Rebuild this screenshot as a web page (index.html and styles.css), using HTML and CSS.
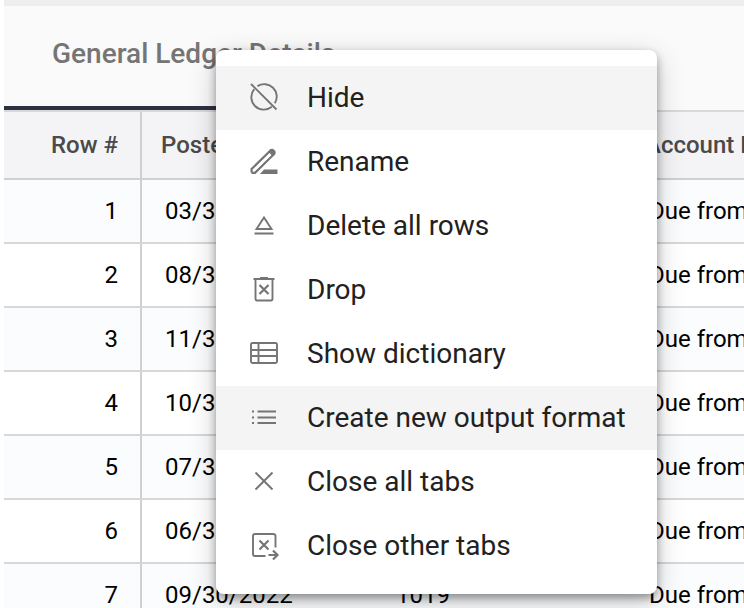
FILE: index.html
```html
<!DOCTYPE html>
<html lang="en">
<head>
<meta charset="utf-8">
<title>General Ledger Details</title>
<link rel="stylesheet" href="styles.css">
</head>
<body>
<main class="workspace">
  <nav class="tabs"><button class="tab" type="button">General Ledger Details</button></nav>
  <table class="ledger">
    <colgroup><col class="col-row"><col class="col-date"><col class="col-account"><col></colgroup>
    <thead>
      <tr><th class="num">Row #</th><th>Posted Date</th><th>Account</th><th>Account Name</th></tr>
    </thead>
    <tbody>
      <tr><td class="num">1</td><td>03/31/2022</td><td>1019</td><td>Due from</td></tr>
      <tr><td class="num">2</td><td>08/31/2022</td><td>1019</td><td>Due from</td></tr>
      <tr><td class="num">3</td><td>11/30/2022</td><td>1019</td><td>Due from</td></tr>
      <tr><td class="num">4</td><td>10/31/2022</td><td>1019</td><td>Due from</td></tr>
      <tr><td class="num">5</td><td>07/31/2022</td><td>1019</td><td>Due from</td></tr>
      <tr><td class="num">6</td><td>06/30/2022</td><td>1019</td><td>Due from</td></tr>
      <tr><td class="num">7</td><td>09/30/2022</td><td>1019</td><td>Due from</td></tr>
    </tbody>
  </table>
</main>
<div class="menu" role="menu">
  <button class="item active" type="button" role="menuitem">
    <svg class="icon" viewBox="0 0 32 32"><path d="M9.500 4.100A12.500 12.500 0 0 1 26.800 21.300M23.800 24.800A12.500 12.500 0 0 1 6.200 7.200M3 2L28.500 27.500"/></svg>Hide</button>
  <button class="item" type="button" role="menuitem">
    <svg class="icon" viewBox="0 0 32 32"><path class="bold" d="M3.600 26.500V23L22.500 4.500L26 8L7 26.900H3.500"/><path class="thin" d="M6.500 24L22.500 8.500"/><path class="solid" d="M21.500 4Q24 1.500 26.500 4Q29 6.500 26.500 9L25 10.500L20 5.500ZM12 28L16 23.500H29.500V28Z"/></svg>Rename</button>
  <button class="item" type="button" role="menuitem">
    <svg class="icon" viewBox="0 0 32 32"><path d="M16 7.500L23.500 19H8.500ZM6.500 23.500H25.500"/></svg>Delete all rows</button>
  <button class="item" type="button" role="menuitem">
    <svg class="icon" viewBox="0 0 32 32"><path d="M5.500 5H26.500M12 4H20M7.500 5V24.500Q7.500 26.500 9 26.500H23Q24.500 26.500 24.500 24.500V5"/><path class="bold" d="M11.500 11L20.500 20M20.500 11L11.500 20"/></svg>Drop</button>
  <button class="item" type="button" role="menuitem">
    <svg class="icon" viewBox="0 0 32 32"><rect x="3" y="5" width="26" height="20" rx="1.500"/><path d="M10.500 5V25M3 12H29M3 18H29"/></svg>Show dictionary</button>
  <button class="item active" type="button" role="menuitem">
    <svg class="icon" viewBox="0 0 32 32"><path d="M4 9.500H6M4 15.500H6M4 21H6M9.500 9.500H28M9.500 15.500H28M9.500 21H28"/></svg>Create new output format</button>
  <button class="item" type="button" role="menuitem">
    <svg class="icon" viewBox="0 0 32 32"><path d="M7.500 6.500L24.500 23.500M24.500 6.500L7.500 23.500"/></svg>Close all tabs</button>
  <button class="item" type="button" role="menuitem">
    <svg class="icon" viewBox="0 0 32 32"><path d="M17.500 26H7Q5 26 5 24V6Q5 4 7 4H25Q27.500 4 27.500 6V17.500"/><path class="bold" d="M11.500 10.500L20.500 19.500M20.500 10.500L11.500 19.500M20.500 25H29M25 20.500L29.500 25L25 29.500"/></svg>Close other tabs</button>
</div>
</body>
</html>
```
FILE: styles.css
```css
* { box-sizing: border-box; }

body {
  margin: 0;
  height: 100vh;
  overflow: hidden;
  background: #fff;
  font-family: Roboto, "Liberation Sans", sans-serif;
}

button {
  border: 0;
  background: none;
  font: inherit;
  text-align: left;
}

.workspace {
  margin-left: 4px;
  border-top: 6px solid #eee;
}

.tabs {
  display: flex;
  background: #fafafa;
}

.tab {
  padding: 32px 48px 36px;
  border-bottom: 4px solid #2d3142;
  color: #757575;
  font-size: 28px;
  font-weight: 500;
  line-height: 32px;
  white-space: nowrap;
}

.ledger {
  width: 100%;
  table-layout: fixed;
  border-spacing: 0;
  border-top: 2px solid #d8d8da;
  font-size: 24px;
  line-height: 32px;
  white-space: nowrap;
}

.col-row { width: 138px; }
.col-date { width: 231px; }
.col-account { width: 253px; }

th, td {
  overflow: hidden;
  border-bottom: 2px solid #d8d8da;
  text-align: left;
}

th {
  height: 68px;
  padding: 0 19px;
  background: #f4f4f6;
  border-color: #d0d0d0;
  color: #4a4a4a;
  font-weight: 500;
}

td {
  height: 64px;
  padding: 0 23px;
  color: #000;
}

th:last-child, td:last-child { padding-right: 0; }

.num {
  padding-right: 22px;
  border-right: 2px solid #d0d0d0;
  text-align: right;
}

tbody tr:nth-child(odd) { background: #fbfcfe; }

.menu {
  position: absolute;
  top: 50px;
  left: 216px;
  padding: 16px 0;
  overflow: hidden;
  border-radius: 8px;
  background: #fff;
  box-shadow: 0 4px 8px rgba(0, 0, 0, .35), 0 8px 28px rgba(0, 0, 0, .2);
}

.item {
  display: flex;
  align-items: center;
  gap: 27px;
  width: 100%;
  height: 64px;
  padding: 0 31px 0 32px;
  color: #212121;
  font-size: 28px;
  line-height: 32px;
  white-space: nowrap;
}

.item.active { background: #f4f4f4; }

.icon {
  flex: none;
  width: 32px;
  height: 32px;
  fill: none;
  stroke: #757575;
  stroke-width: 1.9;
}

.solid { fill: #757575; stroke: none; }
.bold { stroke-width: 2.2; }
.thin { stroke: #fff; stroke-width: 1.8; }
```
